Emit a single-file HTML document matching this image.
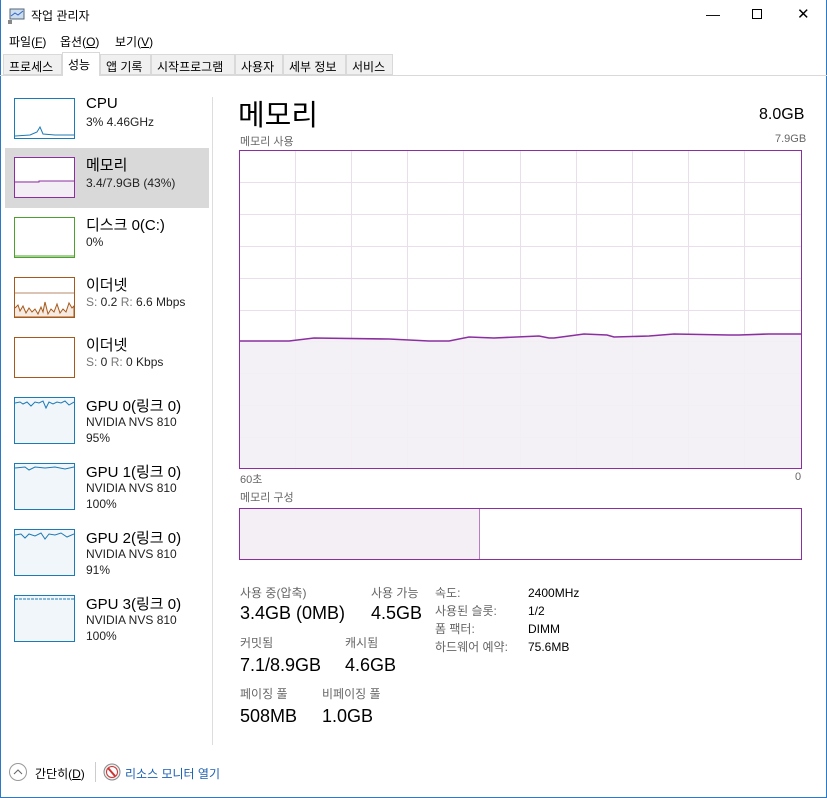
<!DOCTYPE html>
<html><head><meta charset="utf-8"><style>
*{margin:0;padding:0;box-sizing:border-box}
body{width:827px;height:798px;background:#fff;font-family:"Liberation Sans","Noto Sans CJK KR",sans-serif;position:relative;overflow:hidden;color:#000}
.a{position:absolute;white-space:nowrap}
.win{position:absolute;left:0;top:0;width:827px;height:798px;border:1px solid #2b79c9;border-top:none}
.tab{position:absolute;top:54px;height:21px;font-size:12px;padding:3px 5px;border:1px solid #d9d9d9;background:#f0f0f0}
.thumb{position:absolute;left:14px;width:61px;height:41px;border:1px solid;background:#fff}
.t1{position:absolute;left:86px;font-size:15px}
.t2{position:absolute;left:86px;font-size:12px;color:#222;line-height:16px}
.lbl{font-size:12px;color:#666}
.val{font-size:18px}
</style></head><body>
<div class="win"></div>
<svg class="a" style="left:8px;top:8px" width="18" height="16"><rect x="2" y="1" width="14" height="10" fill="#cde" stroke="#567"/><polyline points="3,8 7,5 10,7 15,3" fill="none" stroke="#36c"/><rect x="0" y="12" width="4" height="4" fill="#888"/></svg>
<div class="a" style="left:31px;top:7px;font-size:12px">작업 관리자</div>
<div class="a" style="left:706px;top:6px;font-size:14px">—</div>
<div class="a" style="left:752px;top:9px;width:10px;height:10px;border:1px solid #000"></div>
<div class="a" style="left:797px;top:5px;font-size:15px">✕</div>
<div class="a" style="left:9px;top:33px;font-size:12px">파일(<u>F</u>)</div>
<div class="a" style="left:60px;top:33px;font-size:12px">옵션(<u>O</u>)</div>
<div class="a" style="left:115px;top:33px;font-size:12px">보기(<u>V</u>)</div>
<div class="a" style="left:0;top:75px;width:827px;border-top:1px solid #d9d9d9"></div>
<div class="tab" style="left:3px;width:59px">프로세스</div>
<div class="tab" style="left:62px;width:38px;top:52px;height:24px;background:#fff;border-bottom:none">성능</div>
<div class="tab" style="left:100px;width:51px">앱 기록</div>
<div class="tab" style="left:151px;width:84px">시작프로그램</div>
<div class="tab" style="left:235px;width:48px">사용자</div>
<div class="tab" style="left:283px;width:63px">세부 정보</div>
<div class="tab" style="left:346px;width:47px">서비스</div>
<div class="a" style="left:212px;top:97px;height:648px;border-left:1px solid #ddd"></div>
<div class="a" style="left:5px;top:148px;width:204px;height:60px;background:#d9d9d9"></div>

<div class="thumb" style="top:98px;border-color:#1c7ab7"><svg width="59" height="39"><polyline points="0,37 15,36 22,33 25,28 28,35 40,36 59,36" fill="none" stroke="#1c7ab7"/></svg></div>
<div class="t1" style="top:95px">CPU</div><div class="t2" style="top:114px">3% 4.46GHz</div>
<div class="thumb" style="top:157px;border-color:#8b2fa0"><svg width="59" height="39"><rect x="0" y="23" width="59" height="16" fill="#f3eef5"/><polyline points="0,24 24,24 24,23 59,23" fill="none" stroke="#8b2fa0"/></svg></div>
<div class="t1" style="top:154px">메모리</div><div class="t2" style="top:175px">3.4/7.9GB (43%)</div>
<div class="thumb" style="top:217px;border-color:#4ca02c"><svg width="59" height="39"><polyline points="0,38 59,38" stroke="#4ca02c"/></svg></div>
<div class="t1" style="top:214px">디스크 0(C:)</div><div class="t2" style="top:234px">0%</div>
<div class="thumb" style="top:277px;border-color:#a7591b"><svg width="59" height="39"><line x1="0" y1="15" x2="59" y2="15" stroke="#b98a6a"/><polyline points="0,30 3,27 5,33 8,28 11,35 14,30 17,34 20,31 23,36 26,29 28,34 30,24 33,36 36,31 39,34 42,26 45,35 48,31 51,34 54,25 57,30 59,28 59,39 0,39" fill="#f6ebe2" stroke="#a7591b"/></svg></div>
<div class="t1" style="top:274px">이더넷</div><div class="t2" style="top:294px"><span style="color:#777">S:</span> 0.2 <span style="color:#777">R:</span> 6.6 Mbps</div>
<div class="thumb" style="top:337px;border-color:#a7591b"></div>
<div class="t1" style="top:334px">이더넷</div><div class="t2" style="top:354px"><span style="color:#777">S:</span> 0 <span style="color:#777">R:</span> 0 Kbps</div>

<div class="thumb" style="top:397px;border-color:#1c7ab7;height:47px;background:#f1f6fa"><svg width="59" height="45"><polyline points="0,5 5,4 8,6 12,4 16,8 20,4 24,5 28,3 31,10 34,4 38,6 42,4 46,5 50,3 54,7 59,4" fill="none" stroke="#1c7ab7"/></svg></div>
<div class="t1" style="top:395px">GPU 0(링크 0)</div><div class="t2" style="top:414px">NVIDIA NVS 810<br>95%</div>
<div class="thumb" style="top:463px;border-color:#1c7ab7;height:47px;background:#f1f6fa"><svg width="59" height="45"><polyline points="0,4 10,3 14,6 20,3 30,4 40,3 50,5 59,3" fill="none" stroke="#1c7ab7"/></svg></div>
<div class="t1" style="top:461px">GPU 1(링크 0)</div><div class="t2" style="top:480px">NVIDIA NVS 810<br>100%</div>
<div class="thumb" style="top:529px;border-color:#1c7ab7;height:47px;background:#f1f6fa"><svg width="59" height="45"><polyline points="0,5 6,4 10,8 14,4 20,6 26,3 30,9 34,4 40,5 46,3 52,7 59,4" fill="none" stroke="#1c7ab7"/></svg></div>
<div class="t1" style="top:527px">GPU 2(링크 0)</div><div class="t2" style="top:546px">NVIDIA NVS 810<br>91%</div>
<div class="thumb" style="top:595px;border-color:#1c7ab7;height:47px;background:#f1f6fa"><svg width="59" height="45"><polyline points="0,3 59,3" fill="none" stroke="#1c7ab7" stroke-dasharray="3 1"/></svg></div>
<div class="t1" style="top:593px">GPU 3(링크 0)</div><div class="t2" style="top:612px">NVIDIA NVS 810<br>100%</div>

<div class="a" style="left:238px;top:92px;font-size:29px">메모리</div>
<div class="a" style="left:759px;top:106px;font-size:16px">8.0GB</div>
<div class="a lbl" style="left:240px;top:133px;font-size:11px">메모리 사용</div>
<div class="a lbl" style="left:775px;top:133px;font-size:11px">7.9GB</div>
<svg class="a" style="left:239px;top:150px" width="563" height="319">
<g stroke="#e8dfeb" stroke-width="1">
<line x1="56.5" y1="0" x2="56.5" y2="319"/><line x1="112.5" y1="0" x2="112.5" y2="319"/><line x1="168.5" y1="0" x2="168.5" y2="319"/><line x1="224.5" y1="0" x2="224.5" y2="319"/><line x1="281.5" y1="0" x2="281.5" y2="319"/><line x1="337.5" y1="0" x2="337.5" y2="319"/><line x1="393.5" y1="0" x2="393.5" y2="319"/><line x1="449.5" y1="0" x2="449.5" y2="319"/><line x1="505.5" y1="0" x2="505.5" y2="319"/>
<line x1="0" y1="32.5" x2="563" y2="32.5"/><line x1="0" y1="64.5" x2="563" y2="64.5"/><line x1="0" y1="96.5" x2="563" y2="96.5"/><line x1="0" y1="128.5" x2="563" y2="128.5"/><line x1="0" y1="160.5" x2="563" y2="160.5"/><line x1="0" y1="191.5" x2="563" y2="191.5"/><line x1="0" y1="223.5" x2="563" y2="223.5"/><line x1="0" y1="255.5" x2="563" y2="255.5"/><line x1="0" y1="287.5" x2="563" y2="287.5"/>
</g>
<polygon points="0,191 50,191 75,188 150,189 190,191 210,191 230,187 255,188 300,186 310,188 315,188 345,184 368,185 375,187 410,186 435,184 490,185 500,185 530,184 563,184 563,319 0,319" fill="#f3eff5" fill-opacity="0.9"/>
<polyline points="0,191 50,191 75,188 150,189 190,191 210,191 230,187 255,188 300,186 310,188 315,188 345,184 368,185 375,187 410,186 435,184 490,185 500,185 530,184 563,184" fill="none" stroke="#8b2fa0" stroke-width="1.6"/>
<rect x="0.5" y="0.5" width="562" height="318" fill="none" stroke="#8b2fa0"/>
</svg>
<div class="a lbl" style="left:240px;top:471px;font-size:11px">60초</div>
<div class="a lbl" style="left:795px;top:471px;font-size:11px">0</div>
<div class="a lbl" style="left:240px;top:489px;font-size:11px">메모리 구성</div>
<div class="a" style="left:239px;top:508px;width:563px;height:52px;border:1px solid #8b2fa0"></div>
<div class="a" style="left:240px;top:509px;width:240px;height:50px;background:#f3eff5;border-right:1px solid #b77dc7"></div>

<div class="a lbl" style="left:240px;top:584px">사용 중(압축)</div>
<div class="a val" style="left:240px;top:603px">3.4GB (0MB)</div>
<div class="a lbl" style="left:371px;top:584px">사용 가능</div>
<div class="a val" style="left:371px;top:603px">4.5GB</div>
<div class="a lbl" style="left:240px;top:634px">커밋됨</div>
<div class="a val" style="left:240px;top:655px">7.1/8.9GB</div>
<div class="a lbl" style="left:345px;top:634px">캐시됨</div>
<div class="a val" style="left:345px;top:655px">4.6GB</div>
<div class="a lbl" style="left:240px;top:685px">페이징 풀</div>
<div class="a val" style="left:240px;top:706px">508MB</div>
<div class="a lbl" style="left:322px;top:685px">비페이징 풀</div>
<div class="a val" style="left:322px;top:706px">1.0GB</div>
<div class="a lbl" style="left:435px;top:584px;line-height:18px">속도:<br>사용된 슬롯:<br>폼 팩터:<br>하드웨어 예약:</div>
<div class="a" style="left:528px;top:584px;line-height:18px;font-size:12px">2400MHz<br>1/2<br>DIMM<br>75.6MB</div>

<div class="a" style="left:9px;top:763px;width:18px;height:18px;border:1px solid #999;border-radius:50%"></div>
<svg class="a" style="left:13px;top:768px" width="10" height="8"><polyline points="1,6 5,2 9,6" fill="none" stroke="#666"/></svg>
<div class="a" style="left:35px;top:765px;font-size:12px">간단히(<u>D</u>)</div>
<div class="a" style="left:95px;top:762px;height:20px;border-left:1px solid #ccc"></div>
<svg class="a" style="left:103px;top:763px" width="18" height="18"><circle cx="9" cy="9" r="8" fill="#eee" stroke="#888"/><circle cx="9" cy="9" r="5.5" fill="#fff" stroke="#c33"/><line x1="5" y1="5" x2="12" y2="13" stroke="#c33" stroke-width="2"/></svg>
<div class="a" style="left:125px;top:765px;font-size:12px;color:#1a5fb4">리소스 모니터 열기</div>
</body></html>
